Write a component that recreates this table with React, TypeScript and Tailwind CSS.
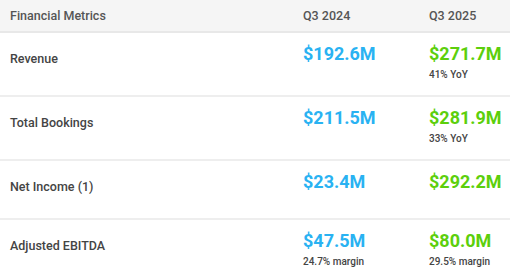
import React from "react";

type Row = {
  label: string;
  a: string;
  b: string;
  aSub?: string;
  bSub?: string;
  h: string;
  border: boolean;
};

const rows: Row[] = [
  { label: "Revenue", a: "$192.6M", b: "$271.7M", bSub: "41% YoY", h: "h-[64px]", border: true },
  { label: "Total Bookings", a: "$211.5M", b: "$281.9M", bSub: "33% YoY", h: "h-[64px]", border: true },
  { label: "Net Income (1)", a: "$23.4M", b: "$292.2M", h: "h-[59px]", border: true },
  { label: "Adjusted EBITDA", a: "$47.5M", b: "$80.0M", aSub: "24.7% margin", bSub: "29.5% margin", h: "h-[64px]", border: false },
];

function Cell({ value, sub, color }: { value: string; sub?: string; color: string }) {
  return (
    <div className="flex flex-col pt-[12px]">
      <div className={`text-[18px] leading-[18px] font-bold ${color}`}>{value}</div>
      {sub && <div className="mt-[6px] text-[10px] leading-[12px] font-medium text-[#444444]">{sub}</div>}
    </div>
  );
}

export default function App() {
  return (
    <div className="w-[510px] h-[269px] overflow-hidden bg-white" style={{ fontFamily: "Roboto, 'Noto Sans', sans-serif" }}>
      <div className="grid grid-cols-[293px_126px_1fr] h-[33px] bg-[#f5f5f5] border-b-2 border-[#e8e8e8] pl-[10px] items-center text-[12.5px] leading-[16px] font-medium text-[#555555]">
        <div>Financial Metrics</div>
        <div>Q3 2024</div>
        <div>Q3 2025</div>
      </div>
      {rows.map((r) => (
        <div
          key={r.label}
          className={`grid grid-cols-[293px_126px_1fr] pl-[10px] items-start ${r.h} ${r.border ? "border-b-2 border-[#eeeeee]" : ""}`}
        >
          <div className="pt-[18px] text-[12.5px] leading-[16px] font-medium text-[#444444]">{r.label}</div>
          <Cell value={r.a} sub={r.aSub} color="text-[#29b2f2]" />
          <Cell value={r.b} sub={r.bSub} color="text-[#5ccf0c]" />
        </div>
      ))}
    </div>
  );
}
